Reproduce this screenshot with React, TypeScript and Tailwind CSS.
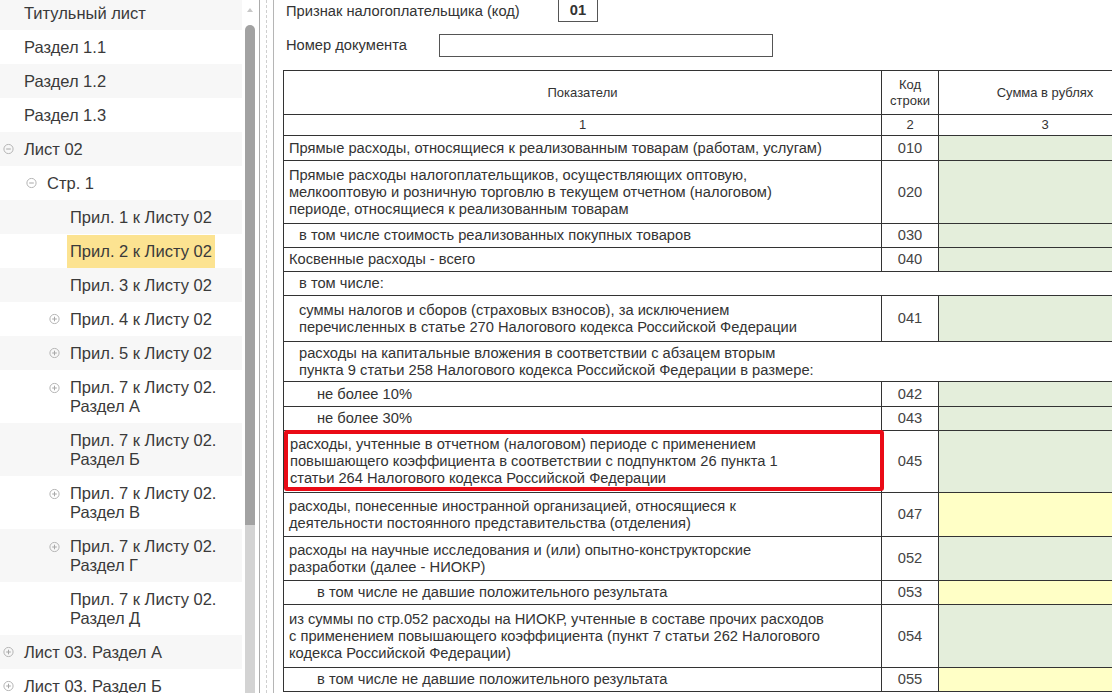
import React from 'react';

type NavItem = {
    lines: string[];
    level: 0 | 1 | 2;
    icon?: 'plus' | 'minus';
    selected?: boolean;
};

const navItems: NavItem[] = [
    { lines: ['Титульный лист'], level: 0 },
    { lines: ['Раздел 1.1'], level: 0 },
    { lines: ['Раздел 1.2'], level: 0 },
    { lines: ['Раздел 1.3'], level: 0 },
    { lines: ['Лист 02'], level: 0, icon: 'minus' },
    { lines: ['Стр. 1'], level: 1, icon: 'minus' },
    { lines: ['Прил. 1 к Листу 02'], level: 2 },
    { lines: ['Прил. 2 к Листу 02'], level: 2, selected: true },
    { lines: ['Прил. 3 к Листу 02'], level: 2 },
    { lines: ['Прил. 4 к Листу 02'], level: 2, icon: 'plus' },
    { lines: ['Прил. 5 к Листу 02'], level: 2, icon: 'plus' },
    { lines: ['Прил. 7 к Листу 02.', 'Раздел А'], level: 2, icon: 'plus' },
    { lines: ['Прил. 7 к Листу 02.', 'Раздел Б'], level: 2 },
    { lines: ['Прил. 7 к Листу 02.', 'Раздел В'], level: 2, icon: 'plus' },
    { lines: ['Прил. 7 к Листу 02.', 'Раздел Г'], level: 2, icon: 'plus' },
    { lines: ['Прил. 7 к Листу 02.', 'Раздел Д'], level: 2 },
    { lines: ['Лист 03. Раздел А'], level: 0, icon: 'plus' },
    { lines: ['Лист 03. Раздел Б'], level: 0, icon: 'plus' },
];

type Row = {
    lines: string[];
    code?: string;
    h: string;
    pad: string;
    fill?: 'green' | 'yellow';
    span?: boolean;
    marked?: boolean;
};

const rows: Row[] = [
    { lines: ['Прямые расходы, относящиеся к реализованным товарам (работам, услугам)'], code: '010', h: 'h-[25px]', pad: 'pl-[5px]', fill: 'green' },
    {
        lines: [
            'Прямые расходы налогоплательщиков, осуществляющих оптовую,',
            'мелкооптовую и розничную торговлю в текущем отчетном (налоговом)',
            'периоде, относящиеся к реализованным товарам',
        ],
        code: '020', h: 'h-[63px]', pad: 'pl-[5px]', fill: 'green',
    },
    { lines: ['в том числе стоимость реализованных покупных товаров'], code: '030', h: 'h-[24px]', pad: 'pl-[15px]', fill: 'green' },
    { lines: ['Косвенные расходы - всего'], code: '040', h: 'h-[24px]', pad: 'pl-[5px]', fill: 'green' },
    { lines: ['в том числе:'], h: 'h-[24px]', pad: 'pl-[15px]', span: true },
    {
        lines: [
            'суммы налогов и сборов (страховых взносов), за исключением',
            'перечисленных в статье 270 Налогового кодекса Российской Федерации',
        ],
        code: '041', h: 'h-[46px]', pad: 'pl-[15px]', fill: 'green',
    },
    {
        lines: [
            'расходы на капитальные вложения в соответствии с абзацем вторым',
            'пункта 9 статьи 258 Налогового кодекса Российской Федерации в размере:',
        ],
        h: 'h-[40px]', pad: 'pl-[15px]', span: true,
    },
    { lines: ['не более 10%'], code: '042', h: 'h-[25px]', pad: 'pl-[33px]', fill: 'green' },
    { lines: ['не более 30%'], code: '043', h: 'h-[24px]', pad: 'pl-[33px]', fill: 'green' },
    {
        lines: [
            'расходы, учтенные в отчетном (налоговом) периоде с применением',
            'повышающего коэффициента в соответствии с подпунктом 26 пункта 1',
            'статьи 264 Налогового кодекса Российской Федерации',
        ],
        code: '045', h: 'h-[62px]', pad: 'pl-[6px]', fill: 'green', marked: true,
    },
    {
        lines: [
            'расходы, понесенные иностранной организацией, относящиеся к',
            'деятельности постоянного представительства (отделения)',
        ],
        code: '047', h: 'h-[44px]', pad: 'pl-[5px]', fill: 'yellow',
    },
    {
        lines: [
            'расходы на научные исследования и (или) опытно-конструкторские',
            'разработки (далее - НИОКР)',
        ],
        code: '052', h: 'h-[44px]', pad: 'pl-[5px]', fill: 'green',
    },
    { lines: ['в том числе не давшие положительного результата'], code: '053', h: 'h-[24px]', pad: 'pl-[33px]', fill: 'yellow' },
    {
        lines: [
            'из суммы по стр.052 расходы на НИОКР, учтенные в составе прочих расходов',
            'с применением повышающего коэффициента (пункт 7 статьи 262 Налогового',
            'кодекса Российской Федерации)',
        ],
        code: '054', h: 'h-[63px]', pad: 'pl-[5px]', fill: 'green',
    },
    { lines: ['в том числе не давшие положительного результата'], code: '055', h: 'h-[24px]', pad: 'pl-[33px]', fill: 'yellow' },
];

const levelPad = ['pl-[24px]', 'pl-[47px]', 'pl-[70px]'];
const iconLeft = ['left-[3px]', 'left-[26px]', 'left-[49px]'];

const TreeIcon = ({ kind }: { kind: 'plus' | 'minus' }) => (
    <svg width="11" height="11" viewBox="0 0 11 11" className="block">
        <circle cx="5.5" cy="5.5" r="4.6" fill="none" stroke="#b4b4b4" strokeWidth="1" />
        <line x1="3.2" y1="5.5" x2="7.8" y2="5.5" stroke="#a8a8a8" strokeWidth="1" />
        {kind === 'plus' && <line x1="5.5" y1="3.2" x2="5.5" y2="7.8" stroke="#a8a8a8" strokeWidth="1" />}
    </svg>
);

const Sidebar = () => (
    <div className="flex w-[259px] h-full flex-shrink-0 bg-white">
        <div className="w-[242px] overflow-hidden">
            <div className="mt-[-4px] flex flex-col">
                {navItems.map((item, i) => (
                    <div
                        key={i}
                        className={`relative flex items-center ${item.lines.length > 1 ? 'h-[53px]' : 'h-[34px]'} ${levelPad[item.level]} ${i % 2 === 0 ? 'bg-[#f7f7f7]' : 'bg-white'}`}
                    >
                        {item.icon && (
                            <span className={`absolute top-1/2 -translate-y-1/2 ${iconLeft[item.level]} ${item.lines.length > 1 ? 'mt-[-9px]' : ''}`}>
                                <TreeIcon kind={item.icon} />
                            </span>
                        )}
                        {item.selected ? (
                            <span className="ml-[-3px] mt-[1px] h-[33px] px-[3px] flex items-center bg-[#fce391] text-[16.5px] text-[#3a3a3a]">
                                {item.lines[0]}
                            </span>
                        ) : (
                            <div className="text-[16.5px] leading-[19px] text-[#3a3a3a]">
                                {item.lines.map(l => <div key={l}>{l}</div>)}
                            </div>
                        )}
                    </div>
                ))}
            </div>
        </div>
        {/* scrollbar */}
        <div className="ml-[3px] w-[10px] flex flex-col">
            <div className="h-[25px] flex justify-center pt-[8px]">
                <div className="w-0 h-0 border-l-[3px] border-r-[3px] border-b-[4px] border-l-transparent border-r-transparent border-b-[#c8c8c8]" />
            </div>
            <div className="h-[500px] bg-[#a2a2a2] rounded-t-[5px]" />
            <div className="flex-1 bg-[#d3d3d3]" />
        </div>
    </div>
);

const Splitter = () => (
    <div className="flex h-full flex-shrink-0">
        <div className="w-px bg-[#ababab]" />
        <div className="w-[6px]" />
        <div className="w-0 border-l border-dashed border-[#cfcfcf]" />
        <div className="w-[6px]" />
        <div className="w-px bg-[#b5b5b5]" />
    </div>
);

const FormTable = () => (
    <div className="w-[868px] border-t border-l border-[#333] text-[#333]">
        <div className="flex h-[44px] border-b border-[#333] text-[13px]">
            <div className="w-[598px] border-r border-[#333] flex items-center justify-center">Показатели</div>
            <div className="w-[57px] border-r border-[#333] flex items-center justify-center text-center leading-[16px]">
                Код<br />строки
            </div>
            <div className="flex-1 flex items-center justify-center">Сумма в рублях</div>
        </div>
        <div className="flex h-[21px] border-b border-[#333] text-[13px]">
            <div className="w-[598px] border-r border-[#333] flex items-center justify-center">1</div>
            <div className="w-[57px] border-r border-[#333] flex items-center justify-center">2</div>
            <div className="flex-1 flex items-center justify-center">3</div>
        </div>
        {rows.map((r, i) => (
            <div key={i} className={`relative flex ${r.h} border-b border-[#333] text-[14.7px] leading-[17px]`}>
                {r.span ? (
                    <div className={`flex-1 flex flex-col justify-center ${r.pad}`}>
                        {r.lines.map(l => <div key={l} className="whitespace-nowrap">{l}</div>)}
                    </div>
                ) : (
                    <>
                        <div className={`w-[598px] border-r border-[#333] flex flex-col justify-center ${r.pad}`}>
                            {r.lines.map(l => <div key={l} className="whitespace-nowrap">{l}</div>)}
                        </div>
                        <div className="w-[57px] border-r border-[#333] flex items-center justify-center text-[#444]">{r.code}</div>
                        <div className={`flex-1 ${r.fill === 'yellow' ? 'bg-[#ffffc6]' : 'bg-[#e4eedb]'}`} />
                    </>
                )}
                {r.marked && (
                    <div className="absolute left-0 top-[-1px] w-[600px] h-[61px] border-4 border-[#ea0a16] rounded-[3px] pointer-events-none" />
                )}
            </div>
        ))}
    </div>
);

const App: React.FC = () => {
    return (
        <div className="flex w-[1112px] h-[693px] overflow-hidden bg-white font-['Liberation_Sans',Arial,sans-serif]">
            <Sidebar />
            <Splitter />

            {/* Form content */}
            <div className="flex-1 overflow-hidden pl-[9px] text-[#333]">
                <div className="flex items-end h-[22px] pl-[3px]">
                    <div className="w-[272px] self-center text-[14.7px]">Признак налогоплательщика (код)</div>
                    <div className="w-[40px] h-[24px] border border-[#555] flex items-center justify-center text-[14.7px] font-bold">01</div>
                </div>
                <div className="flex items-center h-[23px] mt-[12px] pl-[3px]">
                    <div className="w-[153px] text-[14.7px]">Номер документа</div>
                    <div className="w-[334px] h-[23px] border border-[#555] bg-white" />
                </div>
                <div className="mt-[13px]">
                    <FormTable />
                </div>
            </div>
        </div>
    );
};

export default App;
